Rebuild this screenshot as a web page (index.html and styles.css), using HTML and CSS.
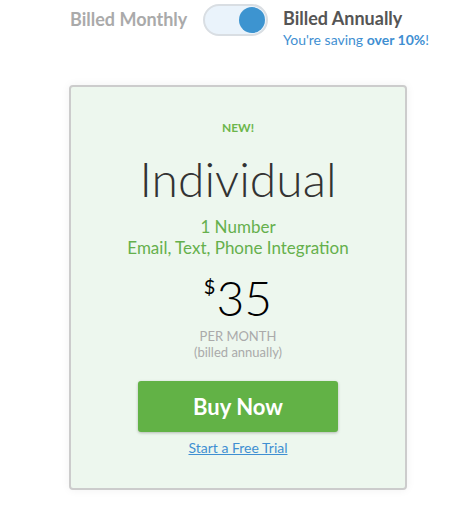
FILE: index.html
```
<!DOCTYPE html>
<html>
<head>
<meta charset="utf-8">
<link rel="stylesheet" href="styles.css">
</head>
<body>
<div class="billing">
  <span class="label-off">Billed Monthly</span>
  <div class="toggle"><span class="knob"></span></div>
  <div class="label-on">
    <div class="annual">Billed Annually</div>
    <div class="saving">You're saving <b>over 10%</b>!</div>
  </div>
</div>
<div class="card">
  <div class="new">NEW!</div>
  <div class="title">Individual</div>
  <div class="features">
    <div>1 Number</div>
    <div>Email, Text, Phone Integration</div>
  </div>
  <div class="price"><span class="cur">$</span><span class="amt">35</span></div>
  <div class="per">PER MONTH</div>
  <div class="billed">(billed annually)</div>
  <button class="buy">Buy Now</button>
  <a class="trial" href="#">Start a Free Trial</a>
</div>
</body>
</html>
```
FILE: styles.css
```
html, body { margin: 0; padding: 0; background: #fff; }
body { font-family: "Lato", "Open Sans", sans-serif; width: 468px; height: 512px; overflow: hidden; }
.billing { display: flex; align-items: flex-start; padding: 4px 0 0 70px; height: 85px; box-sizing: border-box; }
.label-off { font-size: 18px; font-weight: 700; color: #aaaaaa; margin-top: 4px; width: 133px; }
.toggle { width: 61px; height: 28px; border: 2px solid #d9dee3; border-radius: 16px; background: #eaf3fb; position: relative; box-sizing: content-box; }
.knob { position: absolute; right: 1px; top: 1px; width: 26px; height: 26px; border-radius: 50%; background: #3d94d0; }
.label-on { margin-left: 15px; margin-top: 4px; }
.annual { font-size: 18px; font-weight: 700; color: #555555; line-height: 21px; }
.saving { font-size: 14px; color: #3f8fd2; margin-top: 2px; }
.saving b { font-weight: 700; }
.card { margin-left: 69px; width: 338px; height: 405px; box-sizing: border-box; border: 2px solid #cccccc; border-radius: 4px; background: #edf7ee; box-shadow: 0 0 10px rgba(0,0,0,0.06); display: flex; flex-direction: column; align-items: center; padding-top: 34px; }
.new { font-size: 12px; font-weight: 700; color: #6cb64b; line-height: 14px; }
.title { font-size: 48px; font-weight: 300; color: #333333; line-height: 56px; margin-top: 16px; }
.features { color: #65b04c; font-size: 17px; line-height: 21px; text-align: center; margin-top: 9px; }
.price { margin-top: 16px; color: #000; display: flex; align-items: flex-start; line-height: 1; }
.cur { font-size: 20px; margin-top: 2px; margin-right: 1px; }
.amt { font-size: 48px; font-weight: 300; }
.per { font-size: 13px; color: #aaaaaa; margin-top: 6px; line-height: 16px; }
.billed { font-size: 13px; color: #aaaaaa; line-height: 17px; }
.buy { margin-top: 20px; width: 200px; height: 51px; border: 0; border-radius: 3px; background: #62b246; color: #fff; font-family: inherit; font-size: 22px; font-weight: 700; box-shadow: 0 1px 3px rgba(0,0,0,0.25); }
.trial { margin-top: 7px; font-size: 14px; color: #3f8fd2; text-decoration: underline; }
```
